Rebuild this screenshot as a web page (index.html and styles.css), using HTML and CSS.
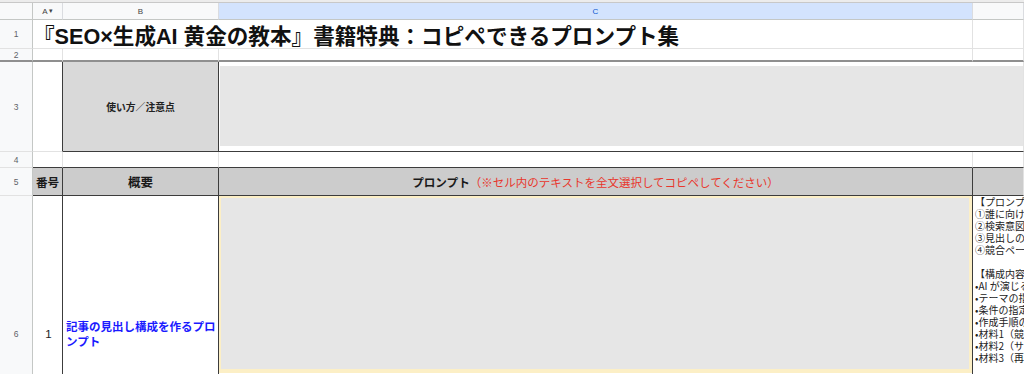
FILE: index.html
```html
<!DOCTYPE html>
<html lang="ja">
<head>
<meta charset="UTF-8" />
<meta name="viewport" content="width=device-width, initial-scale=1" />
<title>SEO×生成AI 黄金の教本 プロンプト集</title>
<link rel="stylesheet" href="styles.css">
</head>
<body>
<div class="topbar"></div>
<div class="sheet">
  <!-- column headers -->
  <div class="hd corner"></div>
  <div class="hd">A<span class="caret">▾</span></div>
  <div class="hd">B</div>
  <div class="hd hd-sel">C</div>
  <div class="hd"></div>

  <!-- row 1 -->
  <div class="rn">1</div>
  <div class="cell title">『SEO×生成AI 黄金の教本』書籍特典：コピペできるプロンプト集</div>
  <div class="cell"></div>

  <!-- row 2 (frozen) -->
  <div class="rn freeze">2</div>
  <div class="cell freeze"></div>
  <div class="cell freeze"></div>
  <div class="cell freeze"></div>
  <div class="cell freeze"></div>

  <!-- row 3 -->
  <div class="rn">3</div>
  <div class="cell dark-r"></div>
  <div class="cell label dark-r dark-b">使い方／注意点</div>
  <div class="cell notes dark-b"><div class="notes-box"></div></div>

  <!-- row 4 -->
  <div class="rn">4</div>
  <div class="cell dark-b"></div>
  <div class="cell dark-b"></div>
  <div class="cell dark-b"></div>
  <div class="cell dark-b"></div>

  <!-- row 5 -->
  <div class="rn">5</div>
  <div class="cell th dark-r dark-b">番号</div>
  <div class="cell th th-big dark-r dark-b">概要</div>
  <div class="cell th dark-r dark-b">プロンプト<span class="hint">（※セル内のテキストを全文選択してコピペしてください）</span></div>
  <div class="cell th dark-b"></div>

  <!-- row 6 -->
  <div class="rn">6</div>
  <div class="cell num dark-r">1</div>
  <div class="cell name dark-r">記事の見出し構成を作るプロ<br>ンプト</div>
  <div class="cell prompt dark-r"><div class="prompt-box"></div></div>
  <div class="cell memo">
    <div>【プロンプトの目的】</div>
    <div>①誰に向けた記事かを明確にする</div>
    <div>②検索意図を満たす見出しにする</div>
    <div>③見出しの構成を論理的に並べる</div>
    <div>④競合ページとの差別化をはかる</div>
    <div>&nbsp;</div>
    <div>【構成内容】</div>
    <div>•AI が演じる役割の指定</div>
    <div>•テーマの指定</div>
    <div>•条件の指定</div>
    <div>•作成手順の指示</div>
    <div>•材料1（競合記事の見出し）</div>
    <div>•材料2（サジェストキーワード）</div>
    <div>•材料3（再検索キーワード）</div>
  </div>
</div>
</body>
</html>
```

FILE: styles.css
```css
* {
  box-sizing: border-box;
}
html, body {
  margin: 0;
  height: 100%;
  overflow: hidden;
  background: #fff;
}
body {
  font-family: "Liberation Sans", "Noto Sans CJK JP", sans-serif;
  color: #222;
}
.topbar {
  height: 3px;
  background: #ececec;
  border-bottom: 1px solid #c8c8c8;
}
.sheet {
  display: grid;
  grid-template-columns: 33px 30px 156px 754px 51px;
  grid-template-rows: 17px 29px 13px 90px 16px 28px 276px;
}

/* column headers */
.hd {
  background: #f8f9fa;
  border-right: 1px solid #dadce0;
  border-bottom: 1px solid #c4c7c5;
  font-size: 8px;
  color: #444;
  display: flex;
  align-items: center;
  justify-content: center;
}
.hd .caret {
  font-size: 7px;
  margin-left: 1px;
}
.hd-sel {
  background: #d3e3fd;
  color: #0b57d0;
}
.corner {
  border-right-color: #c4c7c5;
}

/* row numbers */
.rn {
  background: #f8f9fa;
  border-right: 1px solid #c4c7c5;
  border-bottom: 1px solid #e2e2e2;
  font-size: 8.5px;
  color: #5f6368;
  display: flex;
  align-items: center;
  justify-content: center;
}

/* cells */
.cell {
  border-right: 1px solid #e2e2e2;
  border-bottom: 1px solid #e2e2e2;
  overflow: hidden;
  font-family: "Noto Sans CJK JP", "Liberation Sans", sans-serif;
}
.freeze {
  border-bottom: 2px solid #8f8f8f;
}
.dark-r {
  border-right-color: #3c3c3c;
}
.dark-b {
  border-bottom-color: #3c3c3c;
}

.title {
  grid-column: 2 / span 3;
  font-family: "Liberation Sans", "Noto Sans CJK JP", sans-serif;
  font-size: 21.6px;
  font-weight: 700;
  color: #111;
  display: flex;
  align-items: center;
  padding-left: 0;
  white-space: nowrap;
}

.label {
  background: #d9d9d9;
  font-size: 9.8px;
  font-weight: 700;
  display: flex;
  align-items: center;
  justify-content: center;
}
.notes {
  grid-column: 4 / span 2;
  padding: 4px 0 5px 1px;
}
.notes-box {
  height: 100%;
  background: #e6e6e6;
}

.th {
  background: #cccccc;
  font-size: 11.6px;
  font-weight: 700;
  color: #1a1a1a;
  display: flex;
  align-items: center;
  justify-content: center;
  white-space: nowrap;
}
.th-big {
  font-size: 12.5px;
}
.hint {
  font-weight: 400;
  color: #e8372c;
  font-size: 11.5px;
}

.num {
  font-family: "Liberation Sans", sans-serif;
  font-size: 11.5px;
  display: flex;
  align-items: center;
  justify-content: center;
  padding-left: 2px;
}
.name {
  font-size: 11.5px;
  font-weight: 700;
  line-height: 15px;
  color: #1a1aff;
  display: flex;
  align-items: center;
  padding-left: 3px;
  white-space: nowrap;
}
.prompt {
  padding: 0;
}
.prompt-box {
  height: 177px;
  background: #e6e6e6;
  border: 2px solid #fcefc6;
  border-right-width: 3px;
  border-bottom-width: 4px;
}
.memo {
  border-right: none;
  padding: 0 0 0 2px;
  font-size: 10px;
  line-height: 12px;
  color: #222;
  white-space: nowrap;
}
```
